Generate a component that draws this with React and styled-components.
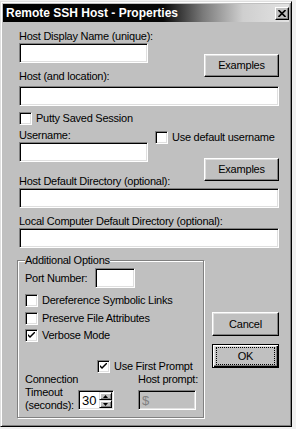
import React from 'react';
import styled, { createGlobalStyle } from 'styled-components';

const Global = createGlobalStyle`
  html, body { margin: 0; padding: 0; background: #f0f0f0; }
  body { font-family: "Liberation Sans", Arial, sans-serif; color: #000; }
  * { box-sizing: border-box; }
`;

const Window = styled.div`
  width: 292px;
  height: 426px;
  margin-top: 1px;
  background: #c0c0c0;
  border: 1px solid;
  border-color: #dfdfdf #000 #000 #dfdfdf;
  box-shadow: inset 1px 1px 0 #fff, inset -1px -1px 0 #808080;
  padding: 2px;
  display: flex;
  flex-direction: column;
`;

const TitleBar = styled.div`
  height: 18px;
  display: flex;
  align-items: center;
  padding: 0 0 0 3px;
  background: linear-gradient(90deg, #000 0px, #080808 160px, #7a7a7a 200px, #cfcfcf 240px, #e2e2e2 286px);
`;

const TitleText = styled.span`
  flex: 1;
  color: #fff;
  font-weight: bold;
  font-size: 12px;
  line-height: 18px;
  white-space: nowrap;
`;

const CloseBtn = styled.div`
  width: 14px;
  height: 13px;
  background: #c0c0c0;
  border: 1px solid;
  border-color: #fff #000 #000 #fff;
  box-shadow: inset -1px -1px 0 #808080;
  display: flex;
  align-items: center;
  justify-content: center;
`;

const Content = styled.div`
  padding: 8px 10px 0 16px;
  display: flex;
  flex-direction: column;
`;

const Label = styled.div`
  font-size: 11px;
  line-height: 13px;
  letter-spacing: -0.25px;
  white-space: nowrap;
  margin-top: ${p => p.$mt || 0}px;
  width: ${p => (p.$w ? `${p.$w}px` : 'auto')};
  flex: none;
`;

const TextField = styled.input`
  display: block;
  height: 20px;
  width: ${p => (p.$w ? `${p.$w}px` : '100%')};
  margin: ${p => p.$mt || 0}px 0 0 0;
  padding: 0 3px;
  background: #fff;
  border: 1px solid;
  border-color: #808080 #fff #fff #808080;
  box-shadow: inset 1px 1px 0 #000, inset -1px -1px 0 #dfdfdf;
  font-family: "Liberation Sans", Arial, sans-serif;
  font-size: 11px;
  outline: none;
  flex: none;
  &:disabled {
    background: #c0c0c0;
    color: #808080;
    -webkit-text-fill-color: #808080;
    font-size: 13px;
  }
`;

const Row = styled.div`
  display: flex;
  align-items: flex-start;
  margin-top: ${p => p.$mt || 0}px;
  margin-left: ${p => p.$ml || 0}px;
`;

const Col = styled.div`
  display: flex;
  flex-direction: column;
  width: ${p => (p.$w ? `${p.$w}px` : 'auto')};
  flex: ${p => (p.$w ? 'none' : '1')};
  margin-top: ${p => p.$mt || 0}px;
  margin-left: ${p => p.$ml || 0}px;
`;

const Button = styled.button`
  width: ${p => p.$w}px;
  height: ${p => p.$h}px;
  margin-top: ${p => p.$mt || 0}px;
  margin-left: ${p => (p.$auto ? 'auto' : '0')};
  align-self: ${p => (p.$end ? 'flex-end' : 'auto')};
  flex: none;
  padding: 0;
  background: #c0c0c0;
  border: 1px solid;
  border-color: ${p => (p.$default ? '#000' : '#fff #000 #000 #fff')};
  box-shadow: ${p =>
    p.$default
      ? 'inset 1px 1px 0 #fff, inset -1px -1px 0 #000, inset -2px -2px 0 #808080, inset 2px 2px 0 #dfdfdf'
      : 'inset -1px -1px 0 #808080, inset 1px 1px 0 #dfdfdf'};
  font-family: "Liberation Sans", Arial, sans-serif;
  font-size: 11px;
  letter-spacing: -0.2px;
  color: #000;
  display: flex;
  align-items: stretch;
  justify-content: stretch;
`;

const ButtonFace = styled.span`
  flex: 1;
  display: flex;
  align-items: center;
  justify-content: center;
  margin: ${p => (p.$focus ? '2px 3px' : '0')};
  border: ${p => (p.$focus ? '1px dotted #000' : 'none')};
  padding-bottom: 1px;
`;

const CheckRow = styled.label`
  display: flex;
  align-items: center;
  gap: 4px;
  height: 13px;
  margin-top: ${p => p.$mt || 0}px;
  margin-left: ${p => p.$ml || 0}px;
  font-size: 11px;
  line-height: 13px;
  letter-spacing: -0.25px;
  white-space: nowrap;
`;

const Box = styled.span`
  width: 13px;
  height: 13px;
  flex: none;
  background: #fff;
  border: 1px solid;
  border-color: #808080 #fff #fff #808080;
  box-shadow: inset 1px 1px 0 #000, inset -1px -1px 0 #dfdfdf;
  display: flex;
  align-items: center;
  justify-content: center;
`;

const Group = styled.fieldset`
  margin: 6px 0 0 0;
  min-width: 0;
  width: 187px;
  flex: none;
  padding: 1px 4px 5px 7px;
  border: 1px solid #808080;
  box-shadow: inset 1px 1px 0 #fff, 1px 1px 0 #fff;
  display: flex;
  flex-direction: column;
`;

const Legend = styled.legend`
  padding: 0;
  margin: 0;
  font-size: 11px;
  line-height: 13px;
  letter-spacing: -0.25px;
  background: #c0c0c0;
`;

const MultiLabel = styled.div`
  width: 53px;
  flex: none;
  font-size: 11px;
  line-height: 13px;
  letter-spacing: -0.25px;
  white-space: nowrap;
`;

const Spin = styled.div`
  width: 36px;
  height: 20px;
  margin-top: 17px;
  flex: none;
  display: flex;
  align-items: stretch;
  background: #fff;
  border: 1px solid;
  border-color: #808080 #fff #fff #808080;
  box-shadow: inset 1px 1px 0 #000, inset -1px -1px 0 #dfdfdf;
  padding: 1px 1px 1px 2px;
`;

const SpinValue = styled.span`
  flex: 1;
  font-size: 13px;
  line-height: 17px;
  padding-left: 1px;
`;

const SpinArrows = styled.div`
  width: 13px;
  display: flex;
  flex-direction: column;
`;

const SpinArrow = styled.div`
  flex: 1;
  background: #c0c0c0;
  border: 1px solid;
  border-color: #dfdfdf #000 #000 #dfdfdf;
  box-shadow: inset 1px 1px 0 #fff, inset -1px -1px 0 #808080;
  display: flex;
  align-items: center;
  justify-content: center;
`;

const Check = () => (
  <svg width="7" height="7" viewBox="0 0 7 7">
    <path d="M0 2 L0 4 L2 6 L7 1 L7 -1 L2 4 Z" fill="#000" />
  </svg>
);

const CheckBox = ({ checked, children, $mt, $ml }) => (
  <CheckRow $mt={$mt} $ml={$ml}>
    <Box>{checked && <Check />}</Box>
    <span>{children}</span>
  </CheckRow>
);

const Tri = ({ up }) => (
  <svg width="5" height="3" viewBox="0 0 5 3">
    <path d={up ? 'M2.5 0 L5 3 L0 3 Z' : 'M0 0 L5 0 L2.5 3 Z'} fill="#000" />
  </svg>
);

export default function App() {
  return (
    <>
      <Global />
      <Window>
        <TitleBar>
          <TitleText>Remote SSH Host - Properties</TitleText>
          <CloseBtn>
            <svg width="8" height="7" viewBox="0 0 8 7">
              <path d="M0.5 0 L7.5 7 M7.5 0 L0.5 7" stroke="#000" strokeWidth="1.6" />
            </svg>
          </CloseBtn>
        </TitleBar>
        <Content>
          <Row>
            <Col $w={136}>
              <Label>Host Display Name (unique):</Label>
              <TextField $w={129} />
              <Label $mt={7}>Host (and location):</Label>
            </Col>
            <Button $w={75} $h={23} $mt={24} $auto>
              <ButtonFace>Examples</ButtonFace>
            </Button>
          </Row>
          <TextField $mt={3} />
          <CheckBox $mt={6}>Putty Saved Session</CheckBox>
          <Row $mt={4}>
            <Col $w={136}>
              <Label>Username:</Label>
              <TextField $w={129} />
              <Label $mt={13}>Host Default Directory (optional):</Label>
            </Col>
            <Col>
              <CheckBox $mt={2}>Use default username</CheckBox>
              <Button $w={75} $h={23} $mt={14} $end>
                <ButtonFace>Examples</ButtonFace>
              </Button>
            </Col>
          </Row>
          <TextField />
          <Label $mt={7}>Local Computer Default Directory (optional):</Label>
          <TextField />
          <Row $ml={-2}>
            <Group>
              <Legend>Additional Options</Legend>
              <Row $mt={0} style={{ alignItems: 'center' }}>
                <Label $w={70}>Port Number:</Label>
                <TextField $w={40} />
              </Row>
              <CheckBox $mt={6}>Dereference Symbolic Links</CheckBox>
              <CheckBox $mt={5}>Preserve File Attributes</CheckBox>
              <CheckBox $mt={4} checked>Verbose Mode</CheckBox>
              <CheckBox $mt={18} $ml={72} checked>Use First Prompt</CheckBox>
              <Row>
                <MultiLabel>
                  Connection
                  <br />
                  Timeout
                  <br />
                  (seconds):
                </MultiLabel>
                <Spin>
                  <SpinValue>30</SpinValue>
                  <SpinArrows>
                    <SpinArrow>
                      <Tri up />
                    </SpinArrow>
                    <SpinArrow>
                      <Tri />
                    </SpinArrow>
                  </SpinArrows>
                </Spin>
                <Col $w={62} $ml={24}>
                  <Label>Host prompt:</Label>
                  <TextField $w={58} $mt={4} disabled defaultValue="$" />
                </Col>
              </Row>
            </Group>
            <Col $w={67} $ml={8}>
              <Button $w={67} $h={24} $mt={64}>
                <ButtonFace>Cancel</ButtonFace>
              </Button>
              <Button $w={67} $h={24} $mt={8} $default>
                <ButtonFace $focus>OK</ButtonFace>
              </Button>
            </Col>
          </Row>
        </Content>
      </Window>
    </>
  );
}
